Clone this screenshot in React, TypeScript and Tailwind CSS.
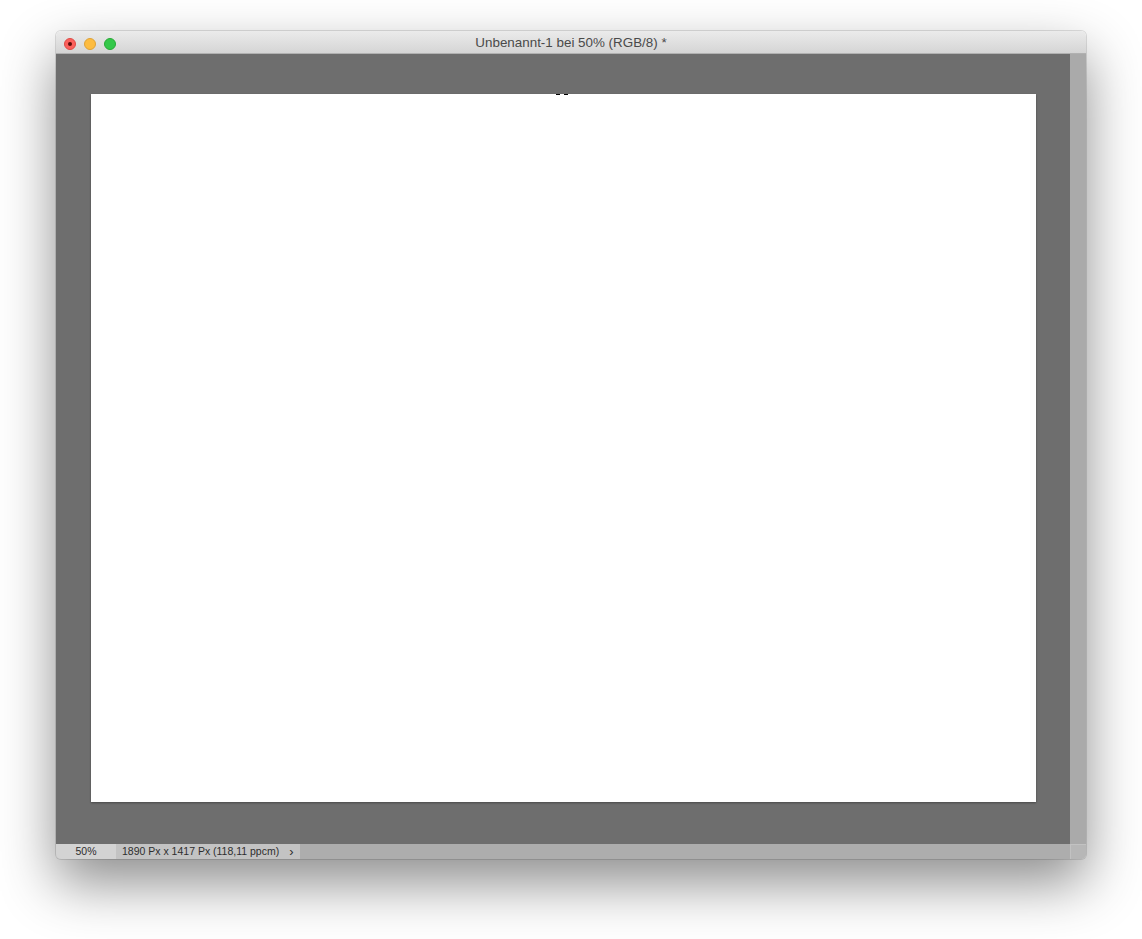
import React from "react";

const font = { fontFamily: '"Liberation Sans", Arial, sans-serif' };

function TrafficLights() {
  return (
    <div className="flex items-center gap-[8px] pl-[8px] pt-[3px]">
      <div className="w-[12px] h-[12px] rounded-full bg-[#fc605c] border border-[#de4a45] flex items-center justify-center">
        <div className="w-[4px] h-[4px] rounded-full bg-[#5a0c0a]" />
      </div>
      <div className="w-[12px] h-[12px] rounded-full bg-[#fdbc40] border border-[#dea236]" />
      <div className="w-[12px] h-[12px] rounded-full bg-[#34c84a] border border-[#27aa35]" />
    </div>
  );
}

export default function App() {
  return (
    <div className="w-[1142px] h-[939px] bg-white pt-[31px] pl-[56px]" style={font}>
      <div className="w-[1030px] h-[828px] flex flex-col rounded-[5px] overflow-hidden shadow-[0_24px_55px_rgba(0,0,0,0.45),0_0_0_1px_rgba(0,0,0,0.12)]">
        {/* title bar */}
        <div className="h-[23px] relative flex items-center bg-gradient-to-b from-[#ebebeb] to-[#d5d5d5] border-b border-[#b1b1b1]">
          <TrafficLights />
          <div className="absolute inset-0 flex items-center justify-center pt-[3px] text-[13.4px] text-[#4a4a4a]">
            Unbenannt-1 bei 50% (RGB/8) *
          </div>
        </div>

        {/* document area */}
        <div className="flex flex-1">
          <div className="flex-1 bg-[#6e6e6e] flex items-center justify-center pb-[2px]">
            <div className="w-[945px] h-[708px] bg-white relative shadow-[0_1px_2px_rgba(0,0,0,0.35)]">
              <div className="absolute top-0 left-[465px] flex gap-[4px]">
                <div className="w-[4px] h-[1px] bg-black" />
                <div className="w-[4px] h-[1px] bg-black" />
              </div>
            </div>
          </div>
          <div className="w-[16px] bg-[#aaaaaa]" />
        </div>

        {/* status bar */}
        <div className="h-[15px] flex bg-[#adadad] text-[10.5px] text-[#2e2e2e] leading-[15px]">
          <div className="w-[60px] bg-[#d3d3d3] text-center">50%</div>
          <div className="w-[184px] bg-[#c3c3c3] pl-[6px] flex items-center">
            <span>1890 Px x 1417 Px (118,11 ppcm)</span>
            <span className="ml-[10px] text-[13px] leading-[15px]">›</span>
          </div>
          <div className="flex-1" />
          <div className="w-[16px] bg-[#b7b7b7] border-l border-t border-[#c2c2c2]" />
        </div>
      </div>
    </div>
  );
}
